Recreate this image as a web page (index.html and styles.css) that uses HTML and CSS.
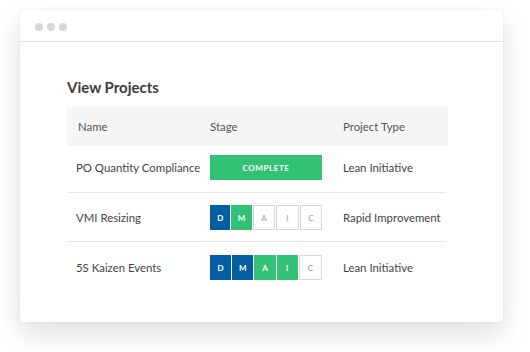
FILE: index.html
```html
<!DOCTYPE html>
<html>
<head>
<meta charset="utf-8">
<link rel="stylesheet" href="styles.css">
</head>
<body>
<div class="window">
  <div class="titlebar">
    <span class="dot"></span><span class="dot"></span><span class="dot"></span>
  </div>
  <div class="content">
    <h1 class="title">View Projects</h1>
    <div class="table">
      <div class="thead">
        <div class="th th-name">Name</div>
        <div class="th">Stage</div>
        <div class="th">Project Type</div>
      </div>
      <div class="row row-first">
        <div class="cell cell-name">PO Quantity Compliance</div>
        <div class="cell"><div class="complete">COMPLETE</div></div>
        <div class="cell">Lean Initiative</div>
      </div>
      <div class="row">
        <div class="cell cell-name">VMI Resizing</div>
        <div class="cell">
          <div class="stages">
            <span class="st blue">D</span><span class="st green">M</span><span class="st empty">A</span><span class="st empty">I</span><span class="st empty">C</span>
          </div>
        </div>
        <div class="cell">Rapid Improvement</div>
      </div>
      <div class="row row-last">
        <div class="cell cell-name">5S Kaizen Events</div>
        <div class="cell">
          <div class="stages">
            <span class="st blue">D</span><span class="st blue">M</span><span class="st green">A</span><span class="st green">I</span><span class="st empty">C</span>
          </div>
        </div>
        <div class="cell">Lean Initiative</div>
      </div>
    </div>
  </div>
</div>
</body>
</html>
```
FILE: styles.css
```css
html, body {
  margin: 0;
  padding: 0;
  background: #ffffff;
}
body {
  font-family: Lato, "Open Sans", sans-serif;
  color: #444444;
  width: 530px;
  height: 352px;
  overflow: hidden;
}
.window {
  margin: 10px 0 0 20px;
  width: 483px;
  height: 312px;
  background: #ffffff;
  border-radius: 4px;
  box-shadow: 0 0 3px rgba(0, 0, 0, 0.07), 0 12px 28px rgba(0, 0, 0, 0.13);
}
.titlebar {
  height: 32px;
  border-bottom: 1px solid #e2e2e2;
  display: flex;
  gap: 4px;
  padding: 13px 0 0 15px;
  box-sizing: border-box;
}
.dot {
  width: 8px;
  height: 8px;
  border-radius: 50%;
  background: #d6d6d6;
}
.content {
  padding: 35px 0 0 47px;
}
.title {
  margin: 0 0 10px 0;
  font-size: 15px;
  line-height: 20px;
  font-weight: 700;
  color: #3c3c3c;
}
.table {
  width: 381px;
  font-size: 11.4px;
  white-space: nowrap;
}
.thead {
  display: grid;
  grid-template-columns: 143px 133px 1fr;
  height: 39px;
  align-items: center;
  background: #f5f5f5;
  color: #555555;
}
.th-name {
  padding-left: 11px;
}
.row {
  display: grid;
  grid-template-columns: 142px 133px 1fr;
  align-items: center;
  padding: 12px 0 11px 0;
  margin: 0 2px 0 1px;
  border-bottom: 1px solid #e6e6e6;
}
.row-first {
  padding-top: 9px;
  padding-bottom: 12px;
}
.row-last {
  border-bottom: none;
  padding-top: 13px;
}
.cell {
  color: #444444;
}
.cell-name {
  padding-left: 8px;
}
.complete {
  width: 112px;
  height: 25px;
  background: #33c175;
  color: #ffffff;
  font-size: 8px;
  font-weight: 700;
  letter-spacing: 0.6px;
  display: flex;
  align-items: center;
  justify-content: center;
}
.stages {
  display: flex;
  width: 112px;
  height: 25px;
  gap: 1px;
}
.st {
  flex: 1;
  display: flex;
  align-items: center;
  justify-content: center;
  font-size: 8px;
  font-weight: 700;
  box-sizing: border-box;
}
.blue {
  background: #045fa2;
  color: #ffffff;
}
.green {
  background: #33c175;
  color: #ffffff;
}
.empty {
  background: #ffffff;
  color: #9a9a9a;
  border: 1px solid #d8d8d8;
  font-weight: 400;
}
```
